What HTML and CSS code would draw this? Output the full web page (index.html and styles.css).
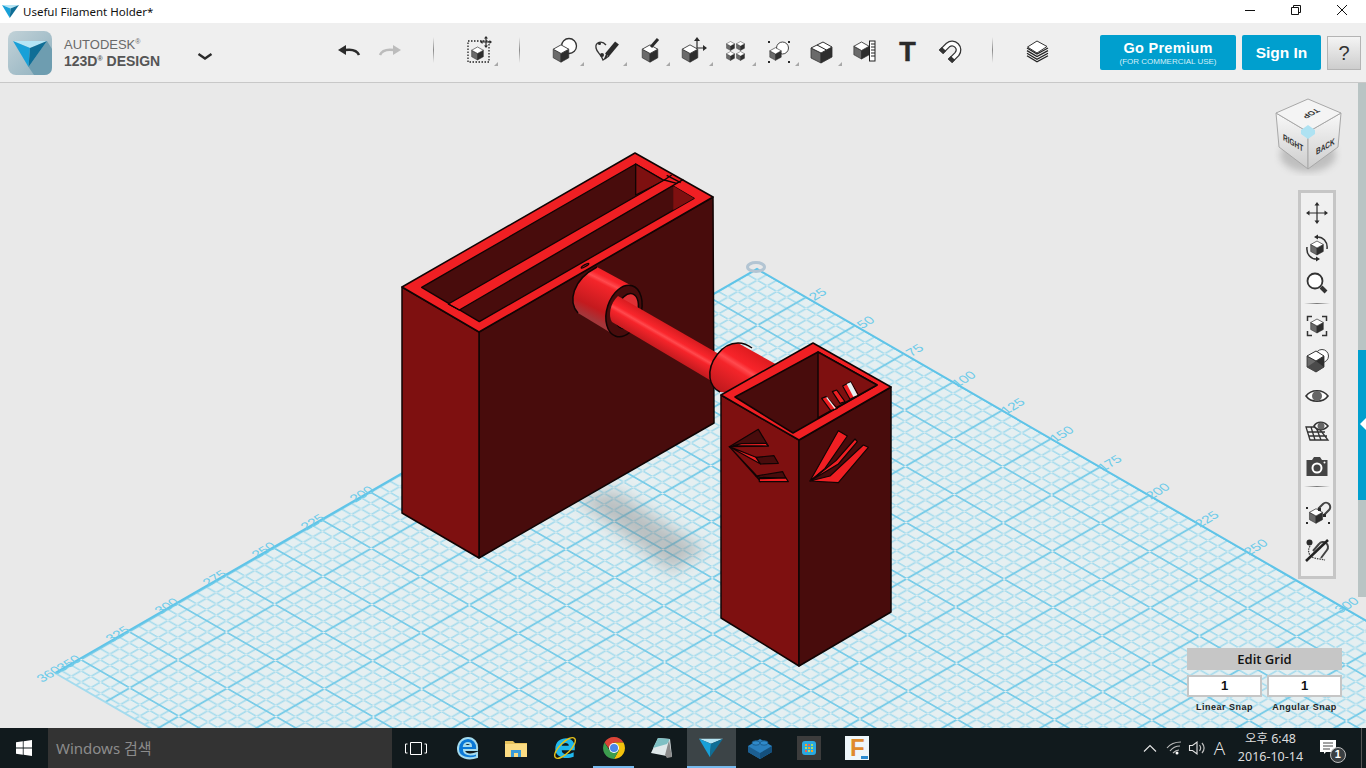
FILE: index.html
```html
<!DOCTYPE html>
<html lang="en">
<head>
<meta charset="utf-8">
<title>Useful Filament Holder*</title>
<link rel="stylesheet" href="styles.css">
</head>
<body>
<svg class="defs" width="0" height="0" aria-hidden="true">
  <defs>
    <symbol id="cube" viewBox="0 0 20 22">
      <path class="c-l" d="M1 6 10 11V21L1 16Z"/>
      <path class="c-r" d="M19 6 10 11V21L19 16Z"/>
      <path class="c-t" d="M10 1 19 6 10 11 1 6Z"/>
    </symbol>
    <symbol id="tri" viewBox="0 0 34 26">
      <path class="t-top" d="M0 0H34L17 7Z"/>
      <path class="t-left" d="M0 0 17 7 15.500 26Z"/>
      <path class="t-right" d="M34 0 17 7 15.500 26Z"/>
    </symbol>
    <pattern id="grid" patternUnits="userSpaceOnUse" width="5" height="5" patternTransform="matrix(9.8 5.66 -9.66 5.58 757 269)">
      <rect class="g-bg" width="5" height="5"/>
      <path class="g-min" d="M.92 0h.16v5h-.16zM1.92 0h.16v5h-.16zM2.92 0h.16v5h-.16zM3.92 0h.16v5h-.16zM0 .92v.16h5v-.16zM0 1.92v.16h5v-.16zM0 2.92v.16h5v-.16zM0 3.92v.16h5v-.16z"/>
      <path class="g-maj" d="M0 0h.1v5h-.1zM4.900 0h.1v5h-.1zM0 0v.1h5v-.1zM0 4.900v.1h5v-.1z"/>
    </pattern>
    <linearGradient id="collar" gradientUnits="userSpaceOnUse" x1="615" y1="268" x2="590" y2="318">
      <stop offset="0" stop-color="#e01c20"/><stop offset=".22" stop-color="#f8242a"/><stop offset=".3" stop-color="#ff4a4e"/><stop offset=".36" stop-color="#f4252a"/><stop offset=".8" stop-color="#c41a1e"/><stop offset="1" stop-color="#a5363a"/>
    </linearGradient>
    <linearGradient id="rod" gradientUnits="userSpaceOnUse" x1="665" y1="323" x2="650" y2="349">
      <stop offset="0" stop-color="#d81c20"/><stop offset=".3" stop-color="#fa262c"/><stop offset=".4" stop-color="#ff4a4e"/><stop offset=".5" stop-color="#f6242a"/><stop offset="1" stop-color="#b4181c"/>
    </linearGradient>
    <linearGradient id="collar2" gradientUnits="userSpaceOnUse" x1="752" y1="352" x2="722" y2="400">
      <stop offset="0" stop-color="#e01c20"/><stop offset=".25" stop-color="#f8242a"/><stop offset=".33" stop-color="#ff4a4e"/><stop offset=".42" stop-color="#f4252a"/><stop offset=".85" stop-color="#c41a1e"/><stop offset="1" stop-color="#a02024"/>
    </linearGradient>
    <linearGradient id="vc-face" x1="0" y1="0" x2="0" y2="1">
      <stop offset="0" stop-color="#f8f8f8"/><stop offset="1" stop-color="#cdcdcd"/>
    </linearGradient>
    <linearGradient id="logo-bg" x1="0" y1="0" x2="1" y2="1">
      <stop offset="0" stop-color="#c2d2d8"/><stop offset="1" stop-color="#8fb0be"/>
    </linearGradient>
    <filter id="blur6" x="-30%" y="-30%" width="160%" height="160%"><feGaussianBlur stdDeviation="8"/></filter>
    <filter id="blur3"><feGaussianBlur stdDeviation="3.500"/></filter>
  </defs>
</svg>

<header class="titlebar">
  <div class="title-left">
    <svg class="title-icon" width="17" height="13"><use href="#tri" width="17" height="13"/></svg>
    <span class="title-text">Useful Filament Holder*</span>
  </div>
  <div class="winctrl">
    <span class="winbtn"><svg width="12" height="12"><path class="ln" d="M1 6.500H11"/></svg></span>
    <span class="winbtn"><svg width="12" height="12"><path class="ln" d="M1.500 3.500H8.500V10.500H1.500ZM3.500 3.500V1.500H10.500V8.500H8.500"/></svg></span>
    <span class="winbtn"><svg width="12" height="12"><path class="ln" d="M1 1 11 11M11 1 1 11"/></svg></span>
  </div>
</header>

<nav class="toolbar">
  <div class="brand">
    <svg class="logo" width="44" height="44" viewBox="0 0 44 44">
      <rect class="logo-bg" width="44" height="44" rx="8"/>
      <path class="logo-sh" d="M39 10 44 18V36Q44 44 36 44H26L20.500 36Z"/>
      <use href="#tri" x="5" y="10" width="34" height="26"/>
    </svg>
    <div class="brand-text">
      <span class="brand-1">AUTODESK<sup>®</sup></span>
      <span class="brand-2">123D<sup>®</sup> DESIGN</span>
    </div>
    <svg class="chev" width="16" height="9"><path d="M1.500 2 8 6.500 14.500 2"/></svg>
  </div>

  <button class="hist"><svg width="32" height="32"><path class="ar-d" d="M6 16 14 11V21Z"/><path class="ar-dl" d="M13 16C20 15 25 16 27 21"/></svg></button>
  <button class="hist"><svg width="32" height="32"><path class="ar-g" d="M27 16 19 11V21Z"/><path class="ar-gl" d="M20 16C13 15 8 16 6 21"/></svg></button>
  <span class="sep sep-a"></span>

  <button class="tool tool-a corner">
    <svg width="32" height="32"><rect class="dots" x="6" y="7" width="21" height="21"/><use href="#cube" x="9" y="12" width="13" height="15"/><path class="mv" d="M24 3V13M19 8H29"/><path class="mvh" d="M24 2 26 4.500H22ZM24 14 26 11.500H22ZM18 8 20.500 6V10ZM30 8 27.500 6V10Z"/></svg>
  </button>
  <span class="sep sep-b"></span>

  <div class="tools">
    <button class="tool corner"><svg width="32" height="32"><circle class="wc" cx="21" cy="12" r="7.500"/><use href="#cube" x="4" y="10" width="18" height="19"/></svg></button>
    <button class="tool corner"><svg width="32" height="32"><path class="sk" d="M15 11C11 6 4 8 5 14 6 19 10 20 12 26L18 22"/><circle class="dk" cx="8.500" cy="9.500" r="1.500"/><circle class="dk" cx="11" cy="21" r="2"/><path class="pen" d="M16 21 26 9"/><path class="pen-t" d="M14 25 16 20"/></svg></button>
    <button class="tool corner"><svg width="32" height="32"><use href="#cube" x="7" y="10" width="18" height="19"/><path class="br" d="M17 13 24 5"/></svg></button>
    <button class="tool corner"><svg width="32" height="32"><use href="#cube" x="4" y="10" width="18" height="19"/><path class="mv" d="M20 5V14H29"/><path class="mvh" d="M20 3 23 7H17ZM30 14 26 11V17Z"/></svg></button>
    <button class="tool corner"><svg width="32" height="32"><use href="#cube" x="6" y="7" width="9" height="10"/><use href="#cube" x="16" y="7" width="9" height="10"/><use href="#cube" x="6" y="17" width="9" height="10"/><use href="#cube" x="16" y="17" width="9" height="10"/></svg></button>
    <button class="tool corner"><svg width="32" height="32"><circle class="wc2" cx="19.500" cy="14" r="6"/><use href="#cube" x="6" y="13" width="13" height="14"/><path class="dk" d="M5 7h2v2H5zM25 7h2v2H25zM5 27h2v2H5zM25 27h2v2H25z"/></svg></button>
    <button class="tool corner"><svg width="32" height="32"><path class="c-l" d="M5 14 15 19V29L5 24Z"/><path class="c-r" d="M26 13 15 19V29L26 23Z"/><path class="c-t" d="M17 8 26 13 15 19 5 14Z"/><path class="ln-d" d="M11 11 20.500 16"/></svg></button>
    <button class="tool"><svg width="32" height="32"><use href="#cube" x="4" y="5" width="17" height="23"/><rect class="rul" x="20.500" y="7" width="5.500" height="20"/><path class="ln-d" d="M22 10h4M22 13h4M22 16h4M22 19h4M22 22h4"/></svg></button>
    <button class="tool"><span class="tee">T</span></button>
    <button class="tool"><svg width="32" height="32"><path class="mg-o" d="M6 18 13 11A6.400 6.400 0 0 1 22 20L15 27"/><path class="mg-i" d="M8 16 13 11A6.400 6.400 0 0 1 22 20L17 25"/><path class="mg-o" d="M6 18 9 15M15 27 18 24"/></svg></button>
  </div>
  <span class="sep sep-b"></span>

  <button class="tool tool-a">
    <svg width="32" height="32"><path class="st" d="M6 14 16 20 27 14M6 16.600 16 22.600 27 16.600M6 19.200 16 25.200 27 19.200M6 21.800 16 27.800 27 21.800"/><path class="c-t" d="M16 7 26 12.500 16 19 6.500 13Z"/></svg>
  </button>

  <div class="account">
    <a class="cta premium"><b>Go Premium</b><small>(FOR COMMERCIAL USE)</small></a>
    <a class="cta signin">Sign In</a>
    <a class="help">?</a>
  </div>
</nav>

<main class="canvas">
  <svg class="scene" width="1366" height="645" viewBox="0 83 1366 645">
    <polygon class="plate" points="757,269 1467,679 765,1083 55,673"/>
    <path class="axis" d="M55 673 757 269 1467 679"/>
    <path class="edge" d="M55 673 765 1083"/>
    <ellipse class="ring" cx="756" cy="267" rx="8.500" ry="4.500"/>

    <g class="lbl">
      <text transform="matrix(.866 -.5 .7 .6 821 297)">25</text>
      <text transform="matrix(.866 -.5 .7 .6 869 325)">50</text>
      <text transform="matrix(.866 -.5 .7 .6 918 353)">75</text>
      <text transform="matrix(.866 -.5 .7 .6 967 382)">100</text>
      <text transform="matrix(.866 -.5 .7 .6 1016 409)">125</text>
      <text transform="matrix(.866 -.5 .7 .6 1065 437)">150</text>
      <text transform="matrix(.866 -.5 .7 .6 1113 466)">175</text>
      <text transform="matrix(.866 -.5 .7 .6 1161 494)">200</text>
      <text transform="matrix(.866 -.5 .7 .6 1210 522)">225</text>
      <text transform="matrix(.866 -.5 .7 .6 1259 550)">250</text>
      <text transform="matrix(.866 -.5 .7 .6 1350 608)">300</text>
      <text transform="matrix(.866 -.5 .7 .6 365 497)">200</text>
      <text transform="matrix(.866 -.5 .7 .6 316 525)">225</text>
      <text transform="matrix(.866 -.5 .7 .6 267 553)">250</text>
      <text transform="matrix(.866 -.5 .7 .6 218 581)">275</text>
      <text transform="matrix(.866 -.5 .7 .6 170 609)">300</text>
      <text transform="matrix(.866 -.5 .7 .6 121 637)">325</text>
      <text transform="matrix(.866 -.5 .7 .6 72 666)">350</text>
      <text transform="matrix(.866 -.5 .7 .6 52 677)">360</text>
    </g>

    <polygon class="shadow" points="575,498 615,490 705,550 672,572" filter="url(#blur6)"/>

    <!-- large holder -->
    <polygon class="fr m" points="479,332 713,197 714,423 479,558"/>
    <polygon class="fl m" points="402,287 479,332 479,558 402,513"/>
    <polygon class="ft m" points="635,153 713,197 479,332 402,287"/>
    <g transform="translate(400 150) scale(.33333)">
      <polygon class="fr m3" points="707,42 882,145 238,515 65,412"/>
      <polygon class="fl m3" points="707,42 793,92 707,135"/>
      <polygon class="fl" points="820,108 882,145 820,180"/>
      <polygon class="ft m3" points="145,462 793,90 830,100 178,480"/>
      <path class="m3" d="M793 90 815 75M830 100 850 88M800 76 842 98M145 462 178 480"/>
      <ellipse class="m3 ftn" cx="555" cy="347" rx="13" ry="3" transform="rotate(-30 555 347)"/>
    </g>

    <!-- spool -->
    <path class="nl" fill="url(#collar)" d="M597 267 632 286 616 336 578 313C568 302 572 280 597 267Z"/>
    <path class="m" fill="none" d="M578 313C568 302 572 280 597 267"/>
    <ellipse class="fr m" cx="624" cy="311" rx="17" ry="26.500" transform="rotate(18 624 311)"/>
    <ellipse class="fin" cx="627" cy="311" rx="10.500" ry="18" transform="rotate(18 627 311)"/>
    <path class="nl" fill="url(#rod)" d="M618 296C610 303 608 316 612 322L730 392 738 365Z"/>
    <path class="nl" fill="url(#collar2)" d="M738 343C722 343 708 362 710 378 711 385 714 389 720 392L800 400 790 372Z"/>
    <path class="m" fill="none" d="M720 392C714 389 711 385 710 378 708 362 722 343 738 343 744 343 748 345 752 348"/>

    <!-- small holder -->
    <polygon class="fl m" points="721,395 799,440 799,666 721,618"/>
    <polygon class="fr m" points="799,440 891,387 891,612 799,666"/>
    <polygon class="ft m" points="813,343 891,387 799,440 721,395"/>
    <polygon class="fr m" points="818,352 877,385 793,433 735,397"/>
    <polygon class="fl m" points="818,352 877,385 818,418"/>
    <g transform="translate(700 340) scale(.33333)">
      <polygon class="ft m4" points="365,175 378,170 412,205 392,212"/>
      <path class="wl" d="M380 172 405 205"/>
      <polygon class="ft m4" points="397,155 410,150 435,185 420,190"/>
      <polygon class="ft m4" points="428,138 452,125 475,165 450,178"/>
      <polygon class="wt" points="440,132 452,127 472,165 460,170"/>

      <polygon class="fr m4" points="88,320 175,268 205,318"/>
      <polygon class="ft m4" points="100,317 125,311 198,310 205,318"/>
      <polygon class="ft m4" points="88,320 168,352 182,372"/>
      <polygon class="fr m4" points="168,352 222,347 235,370 182,372"/>
      <polygon class="ft m4" points="88,320 168,405 182,425"/>
      <polygon class="fr m4" points="168,408 248,395 258,415 180,412"/>
      <polygon class="ft m4" points="178,416 258,414 265,425 178,425"/>

      <polygon class="ft m4" points="330,423 415,272 442,288 375,385"/>
      <polygon class="ft m4" points="335,420 408,362 465,297 472,305 415,372"/>
      <polygon class="ft m4" points="330,423 390,408 490,315 505,322 415,428"/>
    </g>
  </svg>

  <svg class="viewcube" width="86" height="90" viewBox="1266 92 86 90">
    <ellipse class="vc-sh" cx="1308" cy="155" rx="28" ry="17" filter="url(#blur3)"/>
    <polygon class="vc-f" points="1276,113 1308,132 1308,169 1279,147"/>
    <polygon class="vc-f" points="1341,113 1308,132 1308,169 1338,147"/>
    <polygon class="vc-t" points="1308,99 1341,113 1308,132 1276,113"/>
    <polygon class="vc-hi" points="1308,125 1315,130 1315,134 1308,139 1301,134 1301,130"/>
    <text class="vc-x" transform="matrix(-.8 .42 -.75 -.5 1316 108)">TOP</text>
    <text class="vc-x" transform="matrix(.72 .42 0 1 1283 140)">RIGHT</text>
    <text class="vc-x" transform="matrix(.72 -.42 0 1 1316 155)">BACK</text>
  </svg>

  <div class="sidestrip"><span class="side-blue"><i></i></span></div>

  <aside class="navpanel">
    <button class="nav"><svg width="32" height="32"><path class="mv" d="M16 7V25M7 16H25"/><path class="mvh" d="M16 5 18.500 8.500H13.500ZM16 27 18.500 23.500H13.500ZM5 16 8.500 13.500V18.500ZM27 16 23.500 13.500V18.500Z"/></svg></button>
    <button class="nav"><svg width="32" height="32"><use href="#cube" x="9" y="8" width="14" height="16"/><path class="orb" d="M15 5C22 4 27 10 26 17M17 27C10 28 5 22 6 15"/><path class="mvh" d="M13 5 17 2.500V7.500ZM19 27 15 24.500V29.500Z"/></svg></button>
    <button class="nav"><svg width="32" height="32"><circle class="mag" cx="14" cy="14" r="7.500"/><path class="mag-h" d="M20 20 25 25"/></svg></button>
    <span class="navsep"></span>
    <button class="nav"><svg width="32" height="32"><path class="brk" d="M6.500 11V6.500H11M21 6.500H25.500V11M6.500 21V25.500H11M21 25.500H25.500V21"/><use href="#cube" x="9" y="8" width="14" height="16"/></svg></button>
    <button class="nav"><svg width="32" height="32"><circle class="wc2" cx="21" cy="11" r="6.500"/><path class="c-l" d="M6 11 15 16V27L6 22Z"/><path class="c-r" d="M23 11 15 16V27L23 22Z"/><path class="c-t" d="M15 6 23 11 15 16 6 11Z"/><path class="c-s" d="M6 22 15 16 23 22 15 27Z"/></svg></button>
    <button class="nav"><svg width="32" height="32"><path class="eye" d="M5 16C10 9 22 9 27 16 22 23 10 23 5 16Z"/><circle class="iris" cx="16" cy="16" r="5"/></svg></button>
    <button class="nav"><svg width="32" height="32"><path class="gridl" d="M5 12H17L27 25H9ZM7 17H24M8 21H26M10 12 14 25M15 12 20 25"/><path class="eye" d="M13 11C16 6 23 6 27 11 23 16 16 16 13 11Z"/><circle class="iris" cx="20" cy="11" r="3.500"/></svg></button>
    <button class="nav"><svg width="32" height="32"><path class="cam" d="M5.500 10H11L13 7H19L21 10H26.500V26H5.500Z"/><circle class="cam-r" cx="16" cy="18" r="4.500"/><circle class="cam-d" cx="23.500" cy="12.500" r="1"/></svg></button>
    <span class="navsep navsep-b"></span>
    <button class="nav"><svg width="32" height="32"><use href="#cube" x="6" y="12" width="18" height="16"/><path class="mg-s" d="M17 13 22 8A4 4 0 0 1 28 14L23 19"/><path class="dk" d="M5 11h2v2H5zM5 26h2v2H5zM27 26h2v2H27zM17 12h3v3h-3zM22 18h3v3h-3z"/></svg></button>
    <button class="nav nav-last"><svg width="32" height="32"><circle class="dk" cx="8.500" cy="8.500" r="3"/><path class="sk2" d="M9 12C6 17 8 22 13 24L24 26"/><path class="mg-s" d="M12 17 18 10A5 5 0 0 1 26 16L20 24"/><path class="slash" d="M5 27 27 6"/></svg></button>
  </aside>

  <section class="gridpanel">
    <div class="grid-head">Edit Grid</div>
    <div class="snaps">
      <div class="snap"><div class="snap-val">1</div><div class="snap-lbl">Linear Snap</div></div>
      <div class="snap"><div class="snap-val">1</div><div class="snap-lbl">Angular Snap</div></div>
    </div>
  </section>
</main>

<footer class="taskbar">
  <span class="start">
    <svg width="16" height="16" viewBox="0 0 16 16"><path class="w" d="M0 2.300 6.800 1.300V7.500H0ZM7.600 1.200 16 0V7.500H7.600ZM0 8.400H6.800V14.700L0 13.700ZM7.600 8.400H16V16L7.600 14.800Z"/></svg>
  </span>
  <span class="search">Windows 검색</span>
  <span class="taskview">
    <svg width="24" height="16"><path class="tv" d="M6.500 2.500H17.500V14.500H6.500ZM3.500 4H1.500V13H3.500M20.500 4H22.500V13H20.500"/></svg>
  </span>
  <div class="apps">
    <span class="app"><svg width="24" height="24"><path class="edge" fill-rule="evenodd" d="M3 13C3 6 8 2 13 2 18 2 23 6 22 14H9C9 18 15 20 22 17V21C14 24 3 22 3 13ZM9 10H16C16 6 10 6 9 10Z"/></svg></span>
    <span class="app"><svg width="24" height="24"><path class="fo1" d="M1 5H9L11 7H23V21H1Z"/><path class="fo2" d="M1 8H23V21H1Z"/><path class="fo3" d="M7 21V14H17V21H14V17H10V21Z"/></svg></span>
    <span class="app"><svg width="26" height="26" viewBox="0 0 24 24"><path class="ie" fill-rule="evenodd" d="M3 13C3 6 8 3 13 3 18 3 22 7 21 14H9C9 18 15 19 20 16V20C13 23 3 21 3 13ZM9 10H15.500C15.500 6.500 10 6.500 9 10Z"/><ellipse class="iering" cx="12" cy="12" rx="12.500" ry="5" transform="rotate(-45 12 12)"/></svg></span>
    <span class="app is-open"><svg width="24" height="24"><path class="ch-r" d="M12 1A11 11 0 0 1 21.500 6.500H12L6.500 12 2.500 6.500A11 11 0 0 1 12 1Z"/><path class="ch-y" d="M21.500 6.500A11 11 0 0 1 12 23L17 14 12 6.500Z"/><path class="ch-g" d="M12 23A11 11 0 0 1 2.500 6.500L8 15 17 14Z"/><circle class="w" cx="12" cy="12" r="5"/><circle class="ch-b" cx="12" cy="12" r="4"/></svg></span>
    <span class="app"><svg width="24" height="24"><path class="np1" d="M8 2 20 3 22 21 1 17Z"/><path class="np2" d="M19 4 22 21 17 22 15 19Z"/><path class="np3" d="M8 2 20 3 17 8 3 12Z"/></svg></span>
    <span class="app is-active"><svg width="24" height="20"><use href="#tri" width="24" height="20"/></svg></span>
    <span class="app"><svg width="26" height="24"><path class="lg2" d="M1 10 13 3 25 10V16L13 23 1 16Z"/><path class="lg1" d="M1 10 13 17V23L1 16Z"/><path class="lg3" d="M13 17 25 10V16L13 23Z"/><ellipse class="lg4" cx="9" cy="7" rx="4" ry="2.200"/><ellipse class="lg4" cx="17" cy="7" rx="4" ry="2.200"/></svg></span>
    <span class="app"><svg width="24" height="24"><rect class="tile" width="24" height="24"/><rect class="tile-i" x="5" y="5" width="14" height="14" rx="3"/><path class="p1" d="M8 8h2v2H8zM11 11h2v2h-2zM14 14h2v2h-2z"/><path class="p2" d="M11 8h2v2h-2zM8 14h2v2H8z"/><path class="p3" d="M14 8h2v2h-2zM8 11h2v2H8zM14 11h2v2h-2zM11 14h2v2h-2z"/></svg></span>
    <span class="app"><span class="fusion"><b>F</b><i></i></span></span>
  </div>
  <div class="tray">
    <span class="tr tr-chev"><svg width="14" height="9"><path class="tl" d="M1 7.500 7 1.500 13 7.500"/></svg></span>
    <span class="tr tr-wifi"><svg width="16" height="14"><path class="tl2" d="M1 7C5 2 10 1 15 1M4 10C7 6 10 5 14 5M7 12C9 10 10 9 13 9"/><circle class="w" cx="11" cy="12" r="1.500"/></svg></span>
    <span class="tr tr-vol"><svg width="18" height="16"><path class="tl" d="M1.500 5.500H4.500L9 2V14L4.500 10.500H1.500Z"/><path class="tl2" d="M11.500 5C13 7 13 9 11.500 11M14 3C16.500 6 16.500 10 14 13"/></svg></span>
    <span class="tr tr-a">A</span>
    <span class="clock"><span>오후 6:48</span><span>2016-10-14</span></span>
    <span class="notif">
      <svg width="18" height="16"><path class="w" d="M1 1H17V13H7L5 15V13H1Z"/><path class="nl-l" d="M4 4H14M4 7H14M4 10H11"/></svg>
      <b class="badge">1</b>
    </span>
    <span class="showdesk"></span>
  </div>
</footer>
</body>
</html>
```
FILE: styles.css
```css
* { box-sizing: border-box; }
html, body { margin: 0; padding: 0; width: 1366px; height: 768px; overflow: hidden; }
body { font-family: "Liberation Sans", sans-serif; background: #fff; display: flex; flex-direction: column; }
button { border: 0; background: none; padding: 0; margin: 0; font: inherit; }
svg { display: block; }
.defs { position: absolute; }

/* shared icon pieces */
.c-t { fill: #fff; stroke: #333; stroke-width: 1; }
.c-l { fill: #6a6a6a; stroke: #333; stroke-width: .8; }
.c-r { fill: #2e2e2e; stroke: #2e2e2e; stroke-width: .8; }
.c-s { fill: #4a4a4a; }
.t-top { fill: #b5e5f5; }
.t-left { fill: #18a0d8; }
.t-right { fill: #0f6e96; }
.w { fill: #fff; }
.dk { fill: #2b2b2b; }
.ln { fill: none; stroke: #111; stroke-width: 1; }
.ln-d { fill: none; stroke: #222; stroke-width: 1; }
.mv { fill: none; stroke: #2b2b2b; stroke-width: 1.2; }
.mvh { fill: #2b2b2b; }
.wc { fill: #fff; stroke: #333; stroke-width: 1.3; }
.wc2 { fill: #fff; stroke: #444; stroke-width: 1; }

/* title bar */
.titlebar { height: 23px; flex: none; display: flex; justify-content: space-between; background: #fff; }
.title-left { display: flex; align-items: center; padding-left: 2px; }
.title-icon { margin-right: 4px; }
.title-text { font-family: "Noto Sans", sans-serif; font-size: 11.500px; color: #111; }
.winctrl { display: flex; padding-right: 1px; }
.winbtn { width: 46px; display: flex; align-items: center; justify-content: center; padding-bottom: 3px; }

/* toolbar */
.toolbar { height: 60px; flex: none; background: #efefef; border-bottom: 1px solid #c8c8c8; display: flex; align-items: center; padding: 0 0 5px 8px; }
.brand { width: 319px; display: flex; align-items: center; padding-top: 5px; }
.logo-bg { fill: url(#logo-bg); }
.logo-sh { fill: #6e9db0; }
.brand-text { display: flex; flex-direction: column; margin-left: 12px; width: 133px; font-family: "Liberation Sans", sans-serif; }
.brand-text sup { font-size: 7px; line-height: 0; vertical-align: 5px; }
.brand-1 { font-size: 13px; line-height: 16px; color: #6a6a6a; }
.brand-2 { font-size: 14px; line-height: 16px; font-weight: 700; color: #555; }
.chev { margin-top: 8px; }
.chev path { fill: none; stroke: #2b2b2b; stroke-width: 2.4; }
.hist { width: 42px; height: 32px; display: flex; justify-content: center; }
.ar-d { fill: #2b2b2b; }
.ar-dl { fill: none; stroke: #2b2b2b; stroke-width: 2.500; }
.ar-g { fill: #bcbcbc; }
.ar-gl { fill: none; stroke: #bcbcbc; stroke-width: 2.500; }
.sep { width: 1px; height: 26px; background: linear-gradient(#efefef, #8a8a8a 50%, #efefef); }
.sep-a { margin-left: 22px; }
.sep-b { margin-left: 20px; }
.tools { display: flex; margin-left: 22px; }
.tool { position: relative; width: 43px; height: 32px; display: flex; justify-content: center; align-items: center; }
.tool-a { margin-left: 22px; }
.corner::after { content: ""; position: absolute; left: 38px; top: 28px; border-style: solid; border-width: 0 0 4px 4px; border-color: transparent transparent #a8a8a8 transparent; }
.dots { fill: none; stroke: #222; stroke-width: 1.300; stroke-dasharray: 1.500 1.500; }
.sk { fill: none; stroke: #333; stroke-width: 1.300; }
.pen { fill: none; stroke: #2b2b2b; stroke-width: 5; }
.pen-t { fill: none; stroke: #2b2b2b; stroke-width: 2; }
.br { fill: none; stroke: #2b2b2b; stroke-width: 3; }
.rul { fill: #fff; stroke: #222; stroke-width: 1; }
.tee { font-family: "Liberation Sans", sans-serif; font-weight: 700; font-size: 27px; line-height: 32px; color: #2b2b2b; padding-top: 3px; -webkit-text-stroke: .5px #2b2b2b; }
.mg-o { fill: none; stroke: #333; stroke-width: 6; }
.mg-i { fill: none; stroke: #fff; stroke-width: 3.500; }
.mg-s { fill: none; stroke: #444; stroke-width: 2; }
.st { fill: none; stroke: #222; stroke-width: 1.300; }
.account { display: flex; margin-left: 42px; gap: 6px; align-items: center; padding-top: 5px; }
.cta { background: #009fce; color: #fff; border-radius: 2px; display: flex; flex-direction: column; align-items: center; justify-content: center; height: 35px; font-weight: 700; }
.premium { width: 136px; }
.premium b { font-size: 14.500px; line-height: 18px; letter-spacing: .3px; }
.premium small { font-size: 8px; font-weight: 400; line-height: 10px; color: #d4eff8; }
.signin { width: 79px; font-size: 15.500px; padding-top: 1px; }
.help { width: 34px; height: 34px; border: 1px solid #b4b4b4; background: linear-gradient(#f4f4f4, #cdcdcd); color: #333; font-size: 20px; text-align: center; line-height: 32px; }

/* canvas */
.canvas { position: relative; height: 645px; flex: none; background: #e9e9e9; overflow: hidden; }
.plate { fill: url(#grid); }
.g-bg { fill: #e5eff1; }
.g-min { fill: #a4dbed; }
.g-maj { fill: #7accE8; }
.axis { fill: none; stroke: #5fc4e8; stroke-width: 2; }
.edge { fill: none; stroke: #a4dbee; stroke-width: 2; }
.ring { fill: none; stroke: #b3c5d3; stroke-width: 3; }
.lbl text { font-family: "Liberation Sans", sans-serif; font-size: 14px; fill: #6ccbea; text-anchor: middle; }
.shadow { fill: #808080; opacity: .42; }
.ft { fill: #f01f23; }
.fl { fill: #7e1010; }
.fr { fill: #480c0c; }
.ftn { fill: #c01a1e; }
.m { stroke: #100404; stroke-width: 1.500; stroke-linejoin: round; }
.m3 { stroke: #100404; stroke-width: 4; stroke-linejoin: round; }
.m4 { stroke: #100404; stroke-width: 3.500; stroke-linejoin: round; }
path.m3 { fill: none; }
.nl { stroke: none; }
.fin { fill: #e03034; stroke: #100404; stroke-width: 1.500; }
.wl { fill: none; stroke: #e6f0f2; stroke-width: 4; }
.wt { fill: #e6f0f2; }

.viewcube { position: absolute; left: 1266px; top: 9px; }
.vc-sh { fill: #8c8c8c; opacity: .45; }
.vc-f { fill: url(#vc-face); stroke: #a8a8a8; stroke-width: 1; }
.vc-t { fill: #f4f4f4; stroke: #a8a8a8; stroke-width: 1; }
.vc-hi { fill: #aee2f2; }
.vc-x { font-family: "Liberation Sans", sans-serif; font-size: 9px; font-weight: 700; fill: #333; }

.sidestrip { position: absolute; left: 1358px; top: 0; width: 8px; height: 514px; background: #b9c4c4; }
.side-blue { position: absolute; left: 0; top: 267px; width: 8px; height: 150px; background: #009fce; }
.side-blue i { position: absolute; left: 2px; top: 68px; border-style: solid; border-width: 6px 6px 6px 0; border-color: transparent #fff transparent transparent; }

.navpanel { position: absolute; left: 1298px; top: 107px; width: 38px; height: 389px; border: 3px solid #c6c6c6; background: #f0f0f0; display: flex; flex-direction: column; align-items: center; padding-top: 2px; }
.nav { flex: none; width: 32px; height: 35px; display: flex; justify-content: center; align-items: center; }
.nav-last { margin-top: 3px; }
.navsep { flex: none; width: 26px; height: 1px; margin: 3px 0 4px; background: linear-gradient(90deg, #f0f0f0, #777 50%, #f0f0f0); }
.navsep-b { margin-bottom: 7px; }
.orb { fill: none; stroke: #333; stroke-width: 1.500; }
.mag { fill: #fff; stroke: #333; stroke-width: 1.800; }
.mag-h { fill: none; stroke: #333; stroke-width: 4; }
.brk { fill: none; stroke: #333; stroke-width: 1.500; }
.eye { fill: #fff; stroke: #333; stroke-width: 1.600; }
.iris { fill: #666; }
.gridl { fill: none; stroke: #333; stroke-width: 1.300; }
.cam { fill: #444; }
.cam-r { fill: #444; stroke: #fff; stroke-width: 2; }
.cam-d { fill: #fff; }
.sk2 { fill: none; stroke: #444; stroke-width: 1.300; stroke-dasharray: 1.500 1; }
.slash { fill: none; stroke: #222; stroke-width: 2.500; }

.gridpanel { position: absolute; left: 1187px; top: 565px; width: 155px; }
.grid-head { height: 22px; background: #c6c6c6; font-family: "Open Sans", sans-serif; font-size: 13px; font-weight: 600; line-height: 22px; text-align: center; color: #111; }
.snaps { display: flex; gap: 5px; margin-top: 5px; }
.snap { width: 75px; }
.snap-val { height: 22px; border: 2px solid #c6c6c6; background: #fff; font-family: "Liberation Sans", sans-serif; font-weight: 700; font-size: 13px; line-height: 18px; text-align: center; color: #111; }
.snap-lbl { font-family: "Liberation Sans", sans-serif; font-weight: 700; font-size: 9px; letter-spacing: .5px; line-height: 12px; margin-top: 4px; text-align: center; color: #222; }

/* taskbar */
.taskbar { height: 40px; flex: none; background: #111a1d; display: flex; align-items: stretch; }
.start { width: 48px; display: flex; align-items: center; justify-content: center; }
.search { width: 344px; background: #333; color: #8c8c8c; font-family: "Noto Sans", "Noto Sans CJK KR", sans-serif; font-size: 15px; line-height: 40px; padding-left: 8px; }
.taskview { width: 51px; display: flex; align-items: center; justify-content: center; padding-right: 3px; }
.tv { fill: none; stroke: #fff; stroke-width: 1; }
.apps { display: flex; }
.app { width: 48.750px; position: relative; display: flex; align-items: center; justify-content: center; }
.is-open::after, .is-active::after { content: ""; position: absolute; bottom: 0; height: 2px; background: #76b9ed; }
.is-open::after { left: 4px; right: 4px; }
.is-active { background: #3c4447; }
.is-active::after { left: 0; right: 0; }
.edge { fill: #0a78d7; }
.ie { fill: #20b8ee; }
.iering { fill: none; stroke: #e6c21a; stroke-width: 1.300; }
.fo1 { fill: #e6c25c; }
.fo2 { fill: #fbdc83; }
.fo3 { fill: #3a9bd8; }
.ch-r { fill: #db4437; }
.ch-y { fill: #f4c20d; }
.ch-g { fill: #3c9d4e; }
.ch-b { fill: #4a86e8; }
.np1 { fill: #dfe8ea; }
.np2 { fill: #8b8b8b; }
.np3 { fill: #7fc0c4; }
.lg1 { fill: #1c5f92; }
.lg2 { fill: #2a80bf; }
.lg3 { fill: #14507d; }
.lg4 { fill: #2f8aca; stroke: #1c5f92; stroke-width: 1; }
.tile { fill: #3c3c3c; }
.tile-i { fill: #2aa8e0; }
.p1 { fill: #f6a623; }
.p2 { fill: #e85d5d; }
.p3 { fill: #a8e06a; }
.fusion { width: 24px; height: 24px; background: #eef6fa; display: flex; align-items: center; justify-content: center; position: relative; }
.fusion b { font-family: "Liberation Sans", sans-serif; font-size: 24px; line-height: 24px; color: #e08a2c; }
.fusion i { position: absolute; right: 1px; bottom: 1px; width: 7px; height: 3px; background: #2a8ad0; }
.tray { margin-left: auto; display: flex; align-items: center; width: 228px; height: 40px; }
.tr { display: flex; align-items: center; justify-content: center; height: 40px; }
.tr-chev { width: 24px; }
.tr-wifi { width: 26px; }
.tr-vol { width: 20px; }
.tr-a { width: 26px; color: #eee; font-size: 19px; font-family: "Open Sans", sans-serif; font-weight: 300; }
.tl { fill: none; stroke: #e6e6e6; stroke-width: 1.100; }
.tl2 { fill: none; stroke: #bdbdbd; stroke-width: 1.200; }
.clock { width: 78px; display: flex; flex-direction: column; align-items: center; color: #ddd; font-family: "Noto Sans", "Noto Sans CJK KR", sans-serif; font-size: 12.500px; line-height: 18.500px; }
.notif { width: 44px; height: 40px; position: relative; display: flex; align-items: flex-start; justify-content: center; padding: 11px 4px 0 0; }
.nl-l { fill: none; stroke: #444; stroke-width: 1; }
.badge { position: absolute; left: 21px; top: 19px; width: 16px; height: 16px; border-radius: 50%; background: #3a3f42; border: 1.500px solid #bdbdbd; color: #fff; font-size: 11px; line-height: 13px; text-align: center; }
.showdesk { width: 10px; height: 40px; border-right: 1px solid #555; margin-right: 4px; flex: none; }
```
